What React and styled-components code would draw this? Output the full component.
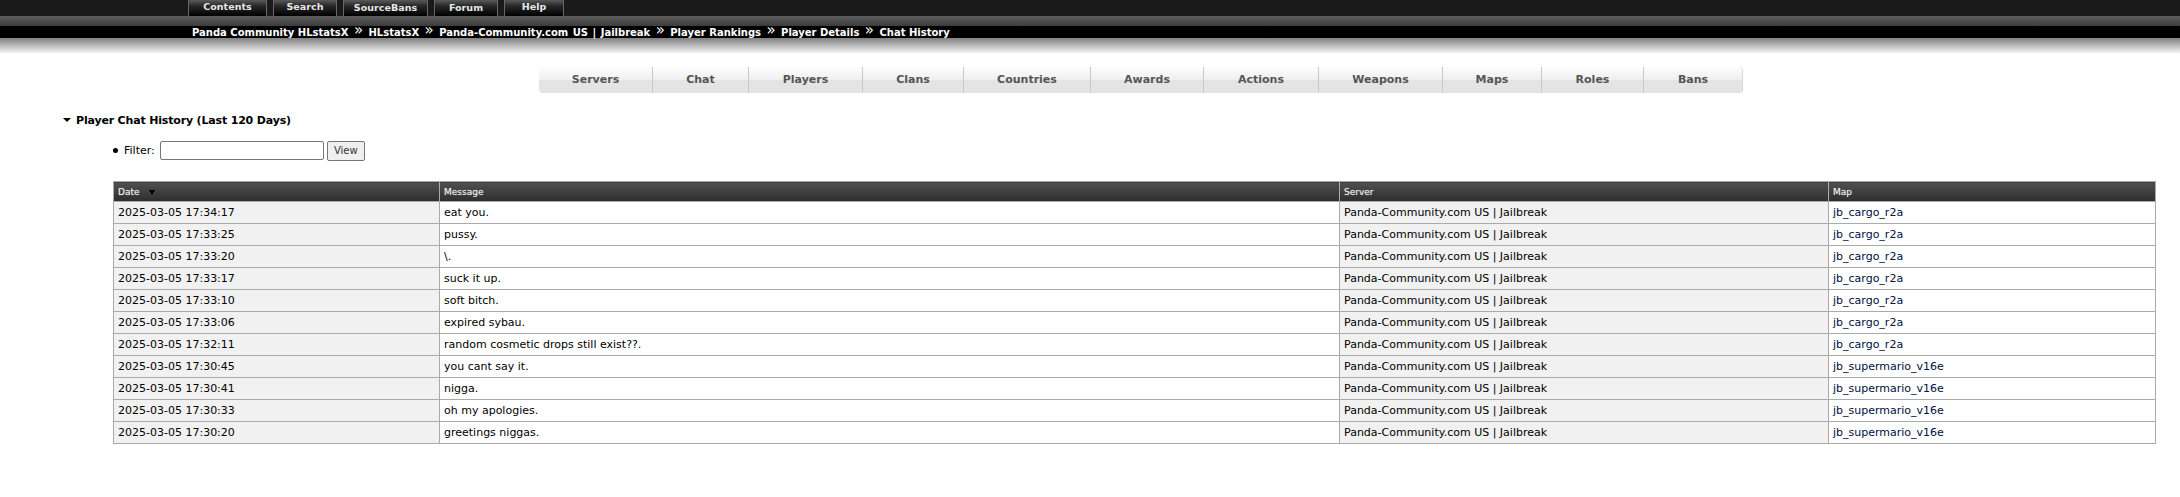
import React from "react";
import styled, { createGlobalStyle } from "styled-components";

const font = `Verdana, "DejaVu Sans", sans-serif`;

const Global = createGlobalStyle`
  html, body {
    margin: 0;
    padding: 0;
    background: #fff;
    color: #000;
    font-family: ${font};
    font-size: 11px;
    overflow: hidden;
  }
`;

const TopBar = styled.div`
  height: 16px;
  background: #1a1a1a;
  display: flex;
  padding-left: 188px;
  gap: 6px;
`;

const TopTab = styled.a`
  width: ${(p) => p.$w}px;
  height: 16px;
  box-sizing: border-box;
  border: 1px solid #666;
  border-top: 0;
  border-bottom: 0;
  background: linear-gradient(#5a5a5a, #2a2a2a 35%, #000);
  color: #e8e8e8;
  font-size: 9.5px;
  font-weight: bold;
  letter-spacing: 0.05px;
  text-align: center;
  line-height: ${(p) => (p.$low ? 16 : 14)}px;
`;

const GreyBar = styled.div`
  height: 10px;
  background: linear-gradient(#5c5c5c, #3c3c3c);
`;

const Crumbs = styled.div`
  height: 12px;
  background: #000;
  padding-left: 192px;
  display: flex;
  align-items: center;
  color: #fff;
  font-size: 10px;
  font-weight: bold;
  white-space: nowrap;
`;

const Crumb = styled.span`
  word-spacing: ${(p) => (p.$wide ? 1 : 0)}px;
`;

const Sep = styled.span`
  width: 20px;
  text-align: center;
  font-size: 15px;
  font-weight: normal;
  line-height: 12px;
  margin-top: -4px;
`;

const Fade = styled.div`
  height: 15px;
  background: linear-gradient(#808080, #f4f4f4);
`;

const NavWrap = styled.div`
  display: flex;
  margin: 14px 0 0 539px;
`;

const NavItem = styled.a`
  width: ${(p) => p.$w}px;
  height: 26px;
  box-sizing: border-box;
  border-right: 1px solid #c8c8c8;
  background: linear-gradient(#fdfdfd, #efefef 50%, #e4e4e4 50%, #e4e4e4);
  color: #555;
  font-size: 11px;
  font-weight: bold;
  text-align: center;
  line-height: 26px;
  &:first-child {
    border-bottom-left-radius: 4px;
  }
  &:last-child {
    border-right: 1px solid #d8d8d8;
    border-radius: 0 4px 4px 0;
  }
`;

const Heading = styled.h1`
  display: flex;
  align-items: center;
  margin: 19px 0 0 63px;
  height: 16px;
  font-size: 11px;
  font-weight: bold;
  letter-spacing: -0.17px;
`;

const Arrow = styled.span`
  width: 0;
  height: 0;
  margin-right: 5px;
  border-left: 4px solid transparent;
  border-right: 4px solid transparent;
  border-top: 4px solid #000;
`;

const FilterRow = styled.form`
  display: flex;
  align-items: center;
  margin: 12px 0 0 113px;
  height: 20px;
`;

const Dot = styled.span`
  width: 5px;
  height: 5px;
  border-radius: 50%;
  background: #000;
  margin-right: 6px;
`;

const FilterInput = styled.input`
  width: 164px;
  height: 19px;
  box-sizing: border-box;
  margin: 0 3px 0 5px;
  border: 1px solid #767676;
  border-radius: 2px;
  padding: 0 2px;
  background: #fff;
`;

const ViewButton = styled.button`
  width: 38px;
  height: 20px;
  margin-top: 1px;
  box-sizing: border-box;
  padding: 0;
  border: 1px solid #767676;
  border-radius: 2px;
  background: #efefef;
  color: #333;
  font-family: ${font};
  font-size: 10px;
`;

const Table = styled.table`
  margin: 21px 0 0 113px;
  width: 2042px;
  border-collapse: collapse;
  table-layout: fixed;
`;

const Th = styled.th`
  width: ${(p) => p.$w}px;
  height: 20px;
  padding: 0 0 0 4px;
  box-sizing: border-box;
  border: 1px solid #aaa;
  background: linear-gradient(#505050, #2e2e2e);
  color: #f0f0f0;
  font-size: 9px;
  font-weight: normal;
  text-shadow: 0 0 1px rgba(255, 255, 255, 0.5);
  text-align: left;
`;

const SortArrow = styled.span`
  display: inline-block;
  margin-left: 9px;
  border-left: 3px solid transparent;
  border-right: 3px solid transparent;
  border-top: 5px solid #000;
`;

const Td = styled.td`
  height: 22px;
  padding: 0 0 0 4px;
  box-sizing: border-box;
  border: 1px solid #aaa;
  background: ${(p) => (p.$shade ? "#f1f1f1" : "#fff")};
  font-size: 11px;
  white-space: nowrap;
`;

const MapLink = styled.a`
  color: #001040;
`;

const topTabs = [
  { label: "Contents", w: 79 },
  { label: "Search", w: 64 },
  { label: "SourceBans", w: 85, low: true },
  { label: "Forum", w: 64, low: true },
  { label: "Help", w: 60 },
];

const crumbs = [
  "Panda Community HLstatsX",
  "HLstatsX",
  "Panda-Community.com US | Jailbreak",
  "Player Rankings",
  "Player Details",
  "Chat History",
];

const navItems = [
  { label: "Servers", w: 114 },
  { label: "Chat", w: 96 },
  { label: "Players", w: 114 },
  { label: "Clans", w: 101 },
  { label: "Countries", w: 127 },
  { label: "Awards", w: 113 },
  { label: "Actions", w: 115 },
  { label: "Weapons", w: 124 },
  { label: "Maps", w: 99 },
  { label: "Roles", w: 102 },
  { label: "Bans", w: 99 },
];

const rows = [
  ["2025-03-05 17:34:17", "eat you.", "jb_cargo_r2a"],
  ["2025-03-05 17:33:25", "pussy.", "jb_cargo_r2a"],
  ["2025-03-05 17:33:20", "\\.", "jb_cargo_r2a"],
  ["2025-03-05 17:33:17", "suck it up.", "jb_cargo_r2a"],
  ["2025-03-05 17:33:10", "soft bitch.", "jb_cargo_r2a"],
  ["2025-03-05 17:33:06", "expired sybau.", "jb_cargo_r2a"],
  ["2025-03-05 17:32:11", "random cosmetic drops still exist??.", "jb_cargo_r2a"],
  ["2025-03-05 17:30:45", "you cant say it.", "jb_supermario_v16e"],
  ["2025-03-05 17:30:41", "nigga.", "jb_supermario_v16e"],
  ["2025-03-05 17:30:33", "oh my apologies.", "jb_supermario_v16e"],
  ["2025-03-05 17:30:20", "greetings niggas.", "jb_supermario_v16e"],
];

export default function App() {
  return (
    <>
      <Global />
      <TopBar>
        {topTabs.map((t) => (
          <TopTab key={t.label} $w={t.w} $low={t.low}>
            {t.label}
          </TopTab>
        ))}
      </TopBar>
      <GreyBar />
      <Crumbs>
        {crumbs.map((c, i) => (
          <React.Fragment key={c}>
            {i > 0 && <Sep>»</Sep>}
            <Crumb $wide={i === 2}>{c}</Crumb>
          </React.Fragment>
        ))}
      </Crumbs>
      <Fade />
      <NavWrap>
        {navItems.map((n) => (
          <NavItem key={n.label} $w={n.w}>
            {n.label}
          </NavItem>
        ))}
      </NavWrap>
      <Heading>
        <Arrow />
        Player Chat History (Last 120 Days)
      </Heading>
      <FilterRow>
        <Dot />
        Filter:
        <FilterInput />
        <ViewButton type="button">View</ViewButton>
      </FilterRow>
      <Table>
        <thead>
          <tr>
            <Th $w={326}>
              Date
              <SortArrow />
            </Th>
            <Th $w={900}>Message</Th>
            <Th $w={489}>Server</Th>
            <Th $w={327}>Map</Th>
          </tr>
        </thead>
        <tbody>
          {rows.map((r) => (
            <tr key={r[0]}>
              <Td $shade>{r[0]}</Td>
              <Td>{r[1]}</Td>
              <Td $shade>Panda-Community.com US | Jailbreak</Td>
              <Td>
                <MapLink>{r[2]}</MapLink>
              </Td>
            </tr>
          ))}
        </tbody>
      </Table>
    </>
  );
}
